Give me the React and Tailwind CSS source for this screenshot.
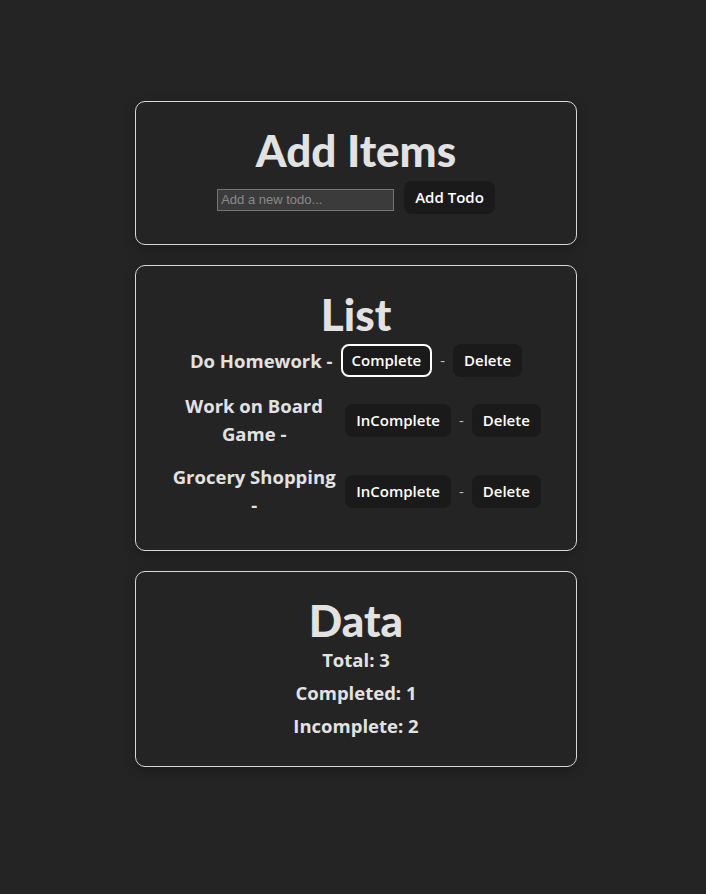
import { useState } from 'react';

const initialTodos = [
  { id: 1, text: 'Do Homework', completed: true },
  { id: 2, text: 'Work on Board Game', completed: false },
  { id: 3, text: 'Grocery Shopping', completed: false },
];

const btn =
  'rounded-lg bg-[#1a1a1a] px-[9px] py-[4px] text-[15px] font-semibold leading-[21px] text-white border-2 border-transparent';

const title = 'text-[44px] font-black leading-[52px] font-[Lato,sans-serif]';

const App = () => {
  const [todos, setTodos] = useState(initialTodos);
  const [text, setText] = useState('');

  const addTodo = () => {
    if (!text.trim()) return;
    setTodos([...todos, { id: Date.now(), text, completed: false }]);
    setText('');
  };

  const toggle = (id) =>
    setTodos(todos.map((t) => (t.id === id ? { ...t, completed: !t.completed } : t)));

  const remove = (id) => setTodos(todos.filter((t) => t.id !== id));

  const done = todos.filter((t) => t.completed).length;

  return (
    <div
      className="min-h-[894px] bg-[#242424] text-[#e2e2e2] pt-[101px] pl-[6px]"
      style={{ fontFamily: '"Open Sans", "Noto Sans", sans-serif' }}
    >
      <div className="mx-auto flex w-[442px] flex-col gap-5">
        <section className="rounded-[10px] border border-[#d8d8d8] pt-[22px] pb-[30px] text-center shadow-[0_4px_12px_rgba(0,0,0,0.25)]">
          <h1 className={title}>Add Items</h1>
          <div className="mt-[5px] flex items-center justify-center gap-[10px]">
            <input
              value={text}
              onChange={(e) => setText(e.target.value)}
              placeholder="Add a new todo..."
              className="mt-[4px] h-[22px] w-[177px] border border-[#767676] bg-[#3b3b3b] px-[3px] text-[13px] text-white placeholder:text-[#8a8a8a] outline-none"
              style={{ fontFamily: '"Liberation Sans", Arial, sans-serif' }}
            />
            <button onClick={addTodo} className={btn}>
              Add Todo
            </button>
          </div>
        </section>

        <section className="rounded-[10px] border border-[#d8d8d8] pt-[22px] pb-[31px] text-center shadow-[0_4px_12px_rgba(0,0,0,0.25)]">
          <h1 className={title}>List</h1>
          <ul className="mt-[4px] flex flex-col items-center gap-[15px]">
            {todos.map((todo) => (
              <li key={todo.id} className="flex items-center gap-[8px]">
                <h3 className="max-w-[166px] text-[18.5px] font-bold leading-[28px]">
                  {todo.text} -
                </h3>
                <button
                  onClick={() => toggle(todo.id)}
                  className={btn + (todo.completed ? ' !border-white' : '')}
                >
                  {todo.completed ? 'Complete' : 'InComplete'}
                </button>
                <span className="text-[15px] text-[#bdbdbd]">-</span>
                <button onClick={() => remove(todo.id)} className={btn}>
                  Delete
                </button>
              </li>
            ))}
          </ul>
        </section>

        <section className="rounded-[10px] border border-[#d8d8d8] pt-[22px] pb-[26px] text-center shadow-[0_4px_12px_rgba(0,0,0,0.25)]">
          <h1 className={title}>Data</h1>
          <div className="flex flex-col gap-[5px] text-[18.5px] font-bold leading-[28px]">
            <h3>Total: {todos.length}</h3>
            <h3>Completed: {done}</h3>
            <h3>Incomplete: {todos.length - done}</h3>
          </div>
        </section>
      </div>
    </div>
  );
};

export default App;
